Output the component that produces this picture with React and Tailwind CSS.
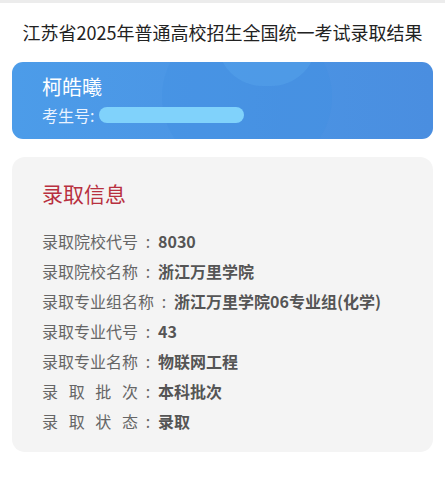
export default function App() {
  const rows = [
    { label: '录取院校代号', value: '8030' },
    { label: '录取院校名称', value: '浙江万里学院' },
    { label: '录取专业组名称', value: '浙江万里学院06专业组(化学)' },
    { label: '录取专业代号', value: '43' },
    { label: '录取专业名称', value: '物联网工程' },
    { label: '录取批次', value: '本科批次', spread: true },
    { label: '录取状态', value: '录取', spread: true },
  ];

  return (
    <div
      className="w-[445px] h-[480px] bg-white overflow-hidden"
      style={{ fontFamily: '"Noto Sans CJK SC", "Noto Sans", sans-serif' }}
    >
      <div className="h-[3px] bg-[#ececec]"></div>

      {/* Title */}
      <div className="h-[59px] flex items-center justify-center text-[18px] text-[#222]">
        江苏省2025年普通高校招生全国统一考试录取结果
      </div>

      {/* Student card */}
      <div className="mx-[12px] h-[77px] rounded-[11px] bg-gradient-to-r from-[#4c9ce9] to-[#4a8ee0] relative overflow-hidden">
        <div className="absolute left-[150px] top-[-40px] w-[170px] h-[150px] rounded-full bg-[#3f8de0] opacity-30"></div>
        <div className="absolute left-[205px] top-[-68px] w-[100px] h-[92px] rounded-full bg-[#5aa8ee] opacity-40"></div>
        <div className="relative pl-[30px] pt-[11px] text-white">
          <div className="text-[20px] leading-[28px]">柯皓曦</div>
          <div className="flex items-center text-[16px] leading-[24px] mt-[2px] text-[#eaf3ff]">
            <span>考生号:</span>
            <span className="ml-[5px] w-[145px] h-[16px] rounded-full bg-[#80d2fb]"></span>
          </div>
        </div>
      </div>

      {/* Admission info */}
      <div className="mx-[12px] mt-[18px] h-[295px] rounded-[13px] bg-[#f4f4f4] px-[30px] pt-[20px]">
        <div className="text-[21px] leading-[32px] text-[#b8303f]">录取信息</div>
        <div className="mt-[17px] flex flex-col">
          {rows.map((r) => (
            <div key={r.label} className="flex items-center h-[30px] text-[16px]">
              {r.spread ? (
                <span
                  className="inline-block w-[96px] text-[#666] text-justify"
                  style={{ textAlignLast: 'justify' }}
                >
                  {r.label}
                </span>
              ) : (
                <span className="text-[#666]">{r.label}</span>
              )}
              <span className="w-[20px] text-center text-[#666]">:</span>
              <span className="font-bold text-[#555]">{r.value}</span>
            </div>
          ))}
        </div>
      </div>
    </div>
  );
}
